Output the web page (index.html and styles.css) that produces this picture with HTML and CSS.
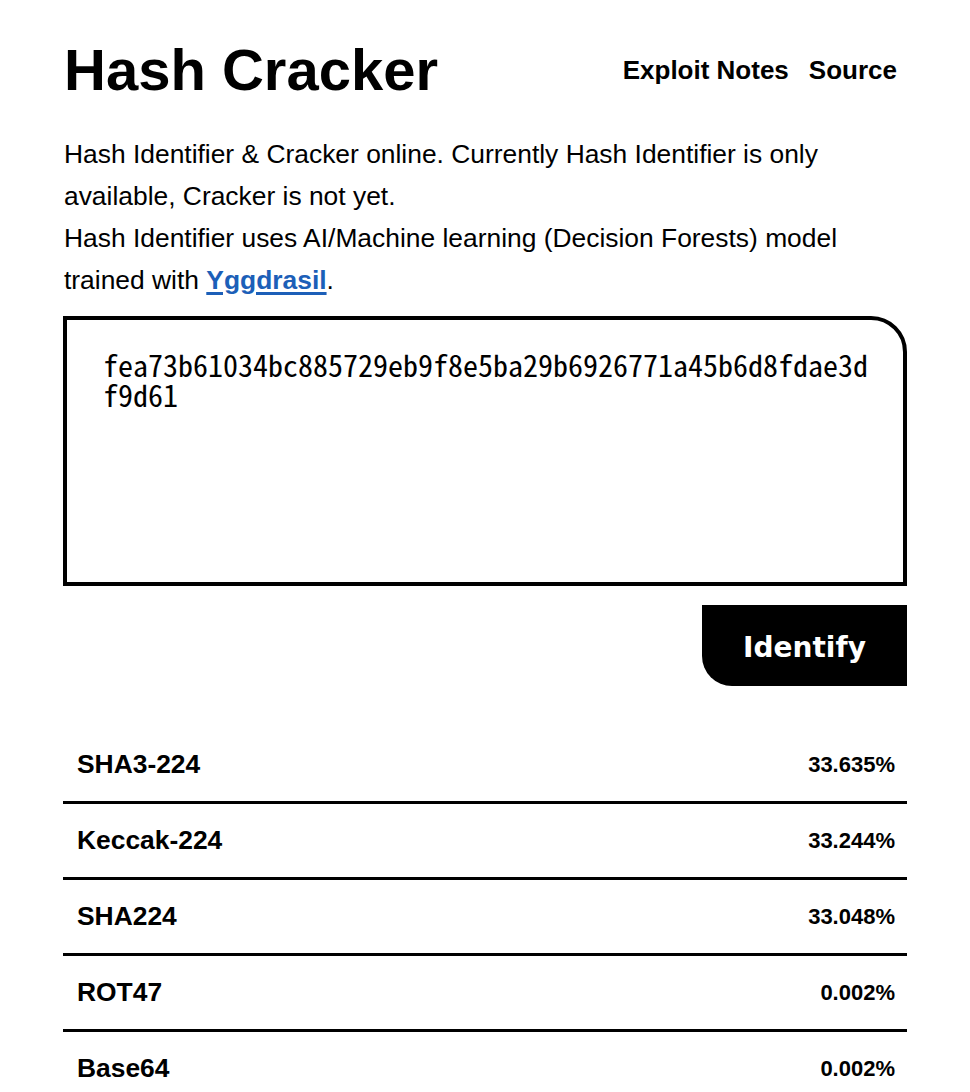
FILE: index.html
```html
<!DOCTYPE html>
<html lang="en">
<head>
<meta charset="utf-8">
<title>Hash Cracker</title>
<link rel="stylesheet" href="styles.css">
</head>
<body>
<div class="page">
  <header class="header">
    <h1 class="title">Hash Cracker</h1>
    <nav class="nav">
      <a class="nav-link" href="#">Exploit Notes</a>
      <a class="nav-link" href="#">Source</a>
    </nav>
  </header>
  <p class="intro">Hash Identifier &amp; Cracker online. Currently Hash Identifier is only available, Cracker is not yet.<br>Hash Identifier uses AI/Machine learning (Decision Forests) model trained with <a class="link" href="#">Yggdrasil</a>.</p>
  <textarea class="hash-input" spellcheck="false">fea73b61034bc885729eb9f8e5ba29b6926771a45b6d8fdae3df9d61</textarea>
  <div class="actions">
    <button class="identify" type="button">Identify</button>
  </div>
  <ul class="results">
    <li class="row"><span class="name">SHA3-224</span><span class="pct">33.635%</span></li>
    <li class="row"><span class="name">Keccak-224</span><span class="pct">33.244%</span></li>
    <li class="row"><span class="name">SHA224</span><span class="pct">33.048%</span></li>
    <li class="row"><span class="name">ROT47</span><span class="pct">0.002%</span></li>
    <li class="row"><span class="name">Base64</span><span class="pct">0.002%</span></li>
  </ul>
</div>
</body>
</html>
```
FILE: styles.css
```css
html, body {
  margin: 0;
  padding: 0;
  background: #fff;
  color: #000;
}
body {
  font-family: "Liberation Sans", Arial, sans-serif;
}
.page {
  width: 844px;
  margin: 0 auto;
}
.header {
  display: flex;
  justify-content: space-between;
  align-items: center;
  margin-top: 36px;
}
.title {
  margin: 0;
  padding-left: 1px;
  font-size: 58px;
  font-weight: 700;
  line-height: 68px;
}
.nav {
  display: flex;
}
.nav-link {
  color: #000;
  text-decoration: none;
  font-weight: 700;
  font-size: 26px;
  padding: 0 10px;
}
.intro {
  margin: 29px 0 0;
  padding-left: 1px;
  font-size: 26.4px;
  line-height: 42px;
}
.link {
  color: #1c5fb8;
  font-weight: 700;
  text-decoration: underline;
  text-decoration-thickness: 3px;
  text-underline-offset: 3px;
}
.hash-input {
  display: block;
  box-sizing: border-box;
  width: 100%;
  height: 270px;
  margin: 15px 0 0;
  border: 4px solid #000;
  border-radius: 0 36px 0 0;
  padding: 29px 26px 0 36px;
  font-family: "Noto Sans Mono CJK JP", "DejaVu Sans Mono", monospace;
  font-size: 30px;
  line-height: 30px;
  color: #000;
  background: #fff;
  resize: none;
  outline: none;
  overflow: hidden;
}
.actions {
  display: flex;
  justify-content: flex-end;
  margin-top: 19px;
}
.identify {
  width: 205px;
  height: 81px;
  border: none;
  border-radius: 0 0 0 30px;
  background: #000;
  color: #fff;
  font-family: "DejaVu Sans", Verdana, sans-serif;
  font-weight: 700;
  font-size: 28px;
  padding: 3px 0 0;
  cursor: pointer;
}
.results {
  list-style: none;
  margin: 42px 0 0;
  padding: 0;
}
.row {
  display: flex;
  justify-content: space-between;
  align-items: center;
  padding: 24px 12px 24px 14px;
  line-height: 25px;
  border-bottom: 3px solid #000;
}
.name {
  font-weight: 700;
  font-size: 26.4px;
}
.pct {
  font-weight: 700;
  font-size: 22px;
}
```
